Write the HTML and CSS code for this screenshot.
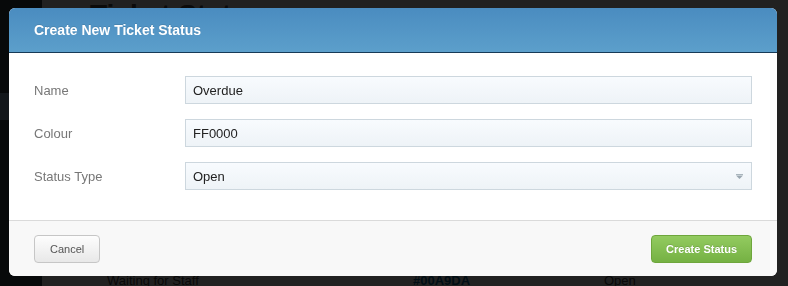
FILE: index.html
```html
<!DOCTYPE html>
<html lang="en">
<head>
  <meta charset="UTF-8">
  <meta name="viewport" content="width=device-width, initial-scale=1.0">
  <link rel="stylesheet" href="styles.css">
</head>
<body>
<div class="page">
  <aside class="sidebar">
    <div class="nav-item"></div>
  </aside>
  <main class="content">
    <h1>Ticket Statuses</h1>
    <table class="statuses">
      <thead>
        <tr><th>Name</th><th>Colour</th><th>Type</th></tr>
      </thead>
      <tbody>
        <tr><td>Open</td><td class="hex">#8CC63F</td><td>Open</td></tr>
        <tr><td>In Progress</td><td class="hex">#F7941D</td><td>Open</td></tr>
        <tr><td>Waiting for Customer</td><td class="hex">#662D91</td><td>Open</td></tr>
        <tr><td>Resolved</td><td class="hex">#999999</td><td>Closed</td></tr>
        <tr><td>Waiting for Staff</td><td class="hex">#00A9DA</td><td>Open</td></tr>
      </tbody>
    </table>
  </main>
</div>

<div class="backdrop"></div>

<div class="modal">
  <div class="modal-header">
    <h3>Create New Ticket Status</h3>
  </div>
  <form class="modal-body">
    <label for="name">Name</label>
    <input id="name" type="text" value="Overdue">

    <label for="colour">Colour</label>
    <input id="colour" type="text" value="FF0000">

    <label for="type">Status Type</label>
    <div class="select">
      <select id="type">
        <option>Open</option>
        <option>Closed</option>
      </select>
      <svg class="caret" width="7" height="5" viewBox="0 0 7 5">
        <rect x="0" y="0" width="7" height="1" fill="#a9b5bd"/>
        <path d="M0 1.5 H7 L3.5 5 Z" fill="#9aa7b0"/>
      </svg>
    </div>
  </form>
  <div class="modal-footer">
    <button class="btn">Cancel</button>
    <button class="btn btn-green">Create Status</button>
  </div>
</div>
</body>
</html>
```

FILE: styles.css
```css
body {
  margin: 0;
  background: #fff;
  font-family: "Liberation Sans", Arial, sans-serif;
  overflow: hidden;
}

.page {
  display: flex;
  min-height: 100vh;
}

.sidebar {
  width: 42px;
  background: #3a4552;
}

.nav-item {
  margin-top: 93px;
  height: 27px;
  background: #92b1d0;
}

.content {
  flex: 1;
  padding-left: 48px;
}

.content h1 {
  margin: 0;
  font-size: 28px;
  line-height: 30px;
  color: #555;
}

.statuses {
  width: 640px;
  table-layout: fixed;
  margin-top: 10px;
  border-collapse: collapse;
  font-size: 13px;
  color: #444;
}

.statuses th,
.statuses td {
  text-align: left;
  padding: 0 17px;
  border-bottom: 1px solid #e4e4e4;
  white-space: nowrap;
}

.statuses th {
  height: 32px;
}

.statuses th:nth-child(1) { width: 272px; }
.statuses th:nth-child(2) { width: 157px; }

.statuses td {
  height: 47px;
  vertical-align: top;
  padding-top: 12px;
  box-sizing: border-box;
}

.hex {
  color: #0a6fa0;
  font-weight: bold;
}

.backdrop {
  position: fixed;
  inset: 0;
  background: rgba(0, 0, 0, 0.87);
}

/* modal */
.modal {
  position: fixed;
  top: 8px;
  left: 9px;
  width: 768px;
  background: #fff;
  border-radius: 6px;
  overflow: hidden;
}

.modal-header {
  height: 45px;
  box-sizing: border-box;
  padding: 0 25px;
  display: flex;
  align-items: center;
  background: linear-gradient(#4a8cc0, #5c9fcb);
  border-bottom: 1px solid #173a57;
}

.modal-header h3 {
  margin: 0;
  font-size: 14px;
  color: #fff;
  text-shadow: 0 -1px 0 rgba(0, 0, 0, 0.1);
}

.modal-body {
  display: grid;
  grid-template-columns: 151px 1fr;
  row-gap: 15px;
  align-items: center;
  margin: 0;
  padding: 23px 25px 30px;
}

.modal-body label {
  font-size: 13px;
  color: #777;
}

.modal-body input,
.modal-body select {
  width: 100%;
  height: 28px;
  box-sizing: border-box;
  margin: 0;
  padding: 0 7px;
  border: 1px solid #cdd7de;
  border-radius: 0;
  background: linear-gradient(#f8fbfe, #eef3f7);
  font-family: "Liberation Sans", Arial, sans-serif;
  font-size: 13px;
  color: #222;
  outline: none;
}

.select {
  position: relative;
}

.modal-body select {
  appearance: none;
  -webkit-appearance: none;
}

.caret {
  position: absolute;
  right: 9px;
  top: 12px;
}

.modal-footer {
  display: flex;
  justify-content: space-between;
  padding: 14px 25px 13px;
  border-top: 1px solid #dadada;
  background: #f8f8f8;
}

.btn {
  height: 28px;
  padding: 0 15px;
  border: 1px solid #c6c6c6;
  border-radius: 4px;
  background: linear-gradient(#fdfdfd, #e8e8e8);
  font-family: "Liberation Sans", Arial, sans-serif;
  font-size: 11px;
  color: #555;
  cursor: pointer;
}

.btn-green {
  padding: 0 14px;
  border-color: #6ea63c;
  background: linear-gradient(#93cb60, #75b143);
  color: #fff;
  font-weight: bold;
  text-shadow: 0 -1px 0 rgba(0, 0, 0, 0.12);
}
```
